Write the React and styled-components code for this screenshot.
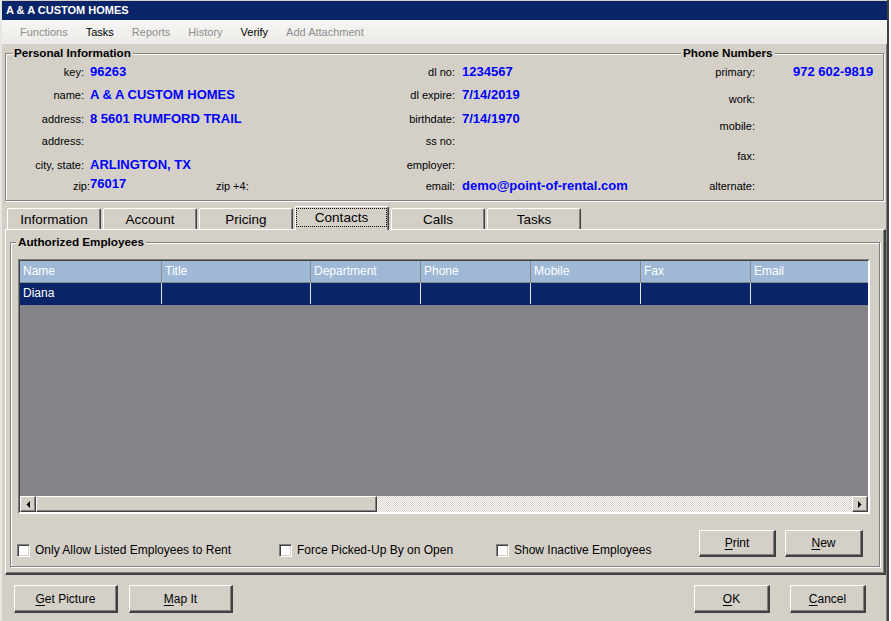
import React from "react";
import styled, { createGlobalStyle, css } from "styled-components";

const Global = createGlobalStyle`
  html, body {
    margin: 0;
    padding: 0;
    background: #ffffff;
  }
  body {
    font-family: "Liberation Sans", Arial, sans-serif;
    color: #000;
  }
  *, *::before, *::after {
    box-sizing: border-box;
  }
`;

const face = "#d4d0c8";
const navy = "#0a246a";

const raised = css`
  border: 1px solid;
  border-color: #ffffff #404040 #404040 #ffffff;
  box-shadow: inset -1px -1px 0 #808080;
`;

const sunken = css`
  border: 1px solid;
  border-color: #808080 #ffffff #ffffff #808080;
  box-shadow: inset 1px 1px 0 #404040, inset -1px -1px 0 ${face};
`;

const Window = styled.div`
  width: 889px;
  height: 621px;
  display: flex;
  flex-direction: column;
  background: ${face};
  border-left: 2px solid #e8e6e2;
  border-right: 2px solid #404040;
  box-shadow: inset -1px 0 0 #808080;
  overflow: hidden;
  & > * {
    flex-shrink: 0;
  }
`;

const TitleBar = styled.div`
  height: 20px;
  border-top: 1px solid ${face};
  background: ${navy};
  color: #fff;
  font-weight: bold;
  font-size: 11px;
  line-height: 19px;
  padding-left: 4px;
`;

const MenuBar = styled.div`
  height: 24px;
  display: flex;
  align-items: center;
  gap: 18px;
  padding-left: 18px;
  background: linear-gradient(#f7f6f4, #ecebe8);
  font-size: 11px;
`;

const MenuItem = styled.span`
  color: ${(p) => (p.$disabled ? "#8d8d8d" : "#000")};
`;

const Content = styled.div`
  display: flex;
  flex-direction: column;
  padding: 9px 1px 0 3px;
  & > * {
    flex-shrink: 0;
  }
`;

const GroupBox = styled.div`
  position: relative;
  border: 1px solid #808080;
  box-shadow: 1px 1px 0 #ffffff, inset 1px 1px 0 #ffffff;
`;

const Legend = styled.span`
  position: absolute;
  top: -8px;
  left: ${(p) => p.$left}px;
  padding: 0 2px;
  background: ${face};
  font-weight: bold;
  font-size: 11.7px;
  line-height: 14px;
`;

const InfoBox = styled(GroupBox)`
  height: 148px;
  margin-right: 2px;
  display: flex;
  padding-top: 9px;
`;

const FieldColumn = styled.div`
  width: ${(p) => p.$width}px;
  display: grid;
  grid-template-columns: ${(p) => p.$labelWidth}px auto;
  grid-template-rows: ${(p) => p.$rows};
  column-gap: ${(p) => p.$gap}px;
  align-content: start;
`;

const Label = styled.span`
  font-size: 11px;
  line-height: 18px;
  text-align: right;
  white-space: nowrap;
  ${(p) => p.$nudge && `margin-right: -${p.$nudge}px;`}
`;

const Value = styled.span`
  font-size: 13px;
  font-weight: bold;
  line-height: 18px;
  color: #0000ff;
  white-space: nowrap;
`;

const ZipCell = styled.div`
  display: flex;
  align-items: flex-start;
`;

const ZipValue = styled(Value)`
  width: 126px;
  margin-top: -2px;
`;

const TabStrip = styled.div`
  display: flex;
  gap: 2px;
  padding-left: 2px;
  margin-top: 5px;
  height: 23px;
  align-items: flex-end;
  position: relative;
  z-index: 1;
`;

const Tab = styled.div`
  width: 94px;
  height: 21px;
  border: 1px solid;
  border-bottom: none;
  border-color: #ffffff #404040 transparent #ffffff;
  box-shadow: inset -1px 0 0 #808080;
  border-radius: 2px 2px 0 0;
  background: ${face};
  display: flex;
  align-items: center;
  justify-content: center;
  font-size: 13.5px;
  ${(p) =>
    p.$active &&
    css`
      height: 24px;
      margin-bottom: -1px;
      padding: 1px 1px 3px 0;
    `}
`;

const FocusRect = styled.div`
  flex: 1;
  align-self: stretch;
  display: flex;
  align-items: center;
  justify-content: center;
  border: 1px dotted #000;
`;

const TabPanel = styled.div`
  ${raised};
  border-right-width: 2px;
  border-bottom-width: 2px;
  height: 346px;
  padding: 12px 4px 6px 4px;
  display: flex;
  flex-direction: column;
`;

const EmployeesBox = styled(GroupBox)`
  flex: 1;
  display: flex;
  flex-direction: column;
  padding: 16px 9px 8px 6px;
`;

const GridFrame = styled.div`
  border: 2px solid;
  border-color: #808080 #ffffff #ffffff #808080;
  margin-left: 1px;
  height: 255px;
  flex-shrink: 0;
  display: flex;
  flex-direction: column;
  background: #858387;
  position: relative;
  &::after {
    content: "";
    position: absolute;
    inset: -1px 0 0 -1px;
    border-top: 1px solid #404040;
    border-left: 1px solid #404040;
    pointer-events: none;
  }
`;

const GridRow = styled.div`
  display: grid;
  grid-template-columns: 142px 149px 110px 110px 110px 110px 1fr;
  height: 22px;
  background: ${(p) => (p.$header ? "#9eb8d6" : navy)};
  border-bottom: 1px solid ${(p) => (p.$header ? "#8a8a8a" : navy)};
`;

const Cell = styled.div`
  color: #fff;
  font-size: 12px;
  line-height: 21px;
  padding-left: 3px;
  border-right: 1px solid ${(p) => (p.$header ? "#8a8a8a" : "#e4e4e4")};
  &:last-child {
    border-right: none;
  }
`;

const GridEmpty = styled.div`
  flex: 1;
`;

const ScrollBar = styled.div`
  height: 16px;
  display: flex;
  background: repeating-conic-gradient(#ffffff 0 25%, ${face} 0 50%) 0 0 / 2px 2px;
`;

const ScrollButton = styled.div`
  ${raised};
  width: 16px;
  height: 16px;
  background: ${face};
  display: flex;
  align-items: center;
  justify-content: center;
`;

const ScrollThumb = styled.div`
  ${raised};
  width: ${(p) => p.$width}px;
  height: 16px;
  background: ${face};
`;

const ScrollTrack = styled.div`
  flex: 1;
`;

const Footer = styled.div`
  flex: 1;
  display: flex;
  align-items: flex-end;
`;

const CheckItem = styled.label`
  width: ${(p) => p.$width}px;
  display: flex;
  align-items: center;
  gap: 5px;
  font-size: 12px;
  height: 14px;
  margin-bottom: 1px;
`;

const CheckBox = styled.span`
  ${sunken};
  width: 13px;
  height: 13px;
  background: #fff;
`;

const Spacer = styled.div`
  flex: 1;
`;

const ButtonGroup = styled.div`
  display: flex;
  gap: ${(p) => p.$gap}px;
  align-self: ${(p) => (p.$top ? "flex-start" : "auto")};
  margin-top: ${(p) => p.$top || 0}px;
  margin-right: ${(p) => p.$right || 0}px;
`;

const Button = styled.button`
  ${raised};
  border-right-width: 2px;
  border-bottom-width: 2px;
  width: ${(p) => p.$width}px;
  height: ${(p) => p.$height}px;
  background: ${face};
  font-family: "Liberation Sans", Arial, sans-serif;
  font-size: 12px;
  color: #000;
  padding: 0;
  u {
    text-decoration-thickness: 1px;
    text-underline-offset: 2px;
  }
`;

const BottomBar = styled.div`
  display: flex;
  padding: 10px 21px 0 12px;
`;

const Arrow = ({ dir }) => (
  <svg width="4" height="7" viewBox="0 0 4 7">
    {dir === "left" ? (
      <polygon points="4,0 4,7 0.5,3.5" fill="#000" />
    ) : (
      <polygon points="0,0 0,7 3.5,3.5" fill="#000" />
    )}
  </svg>
);

const tabs = ["Information", "Account", "Pricing", "Contacts", "Calls", "Tasks"];
const columns = ["Name", "Title", "Department", "Phone", "Mobile", "Fax", "Email"];

const leftRows = "23px 24px 22px 24px 21px 18px";
const rightRows = "27px 27px 30px 30px 18px";

export default function App() {
  return (
    <>
      <Global />
      <Window>
        <TitleBar>A &amp; A CUSTOM HOMES</TitleBar>
        <MenuBar>
          <MenuItem $disabled>Functions</MenuItem>
          <MenuItem>Tasks</MenuItem>
          <MenuItem $disabled>Reports</MenuItem>
          <MenuItem $disabled>History</MenuItem>
          <MenuItem>Verify</MenuItem>
          <MenuItem $disabled>Add Attachment</MenuItem>
        </MenuBar>
        <Content>
          <InfoBox>
            <Legend $left={6}>Personal Information</Legend>
            <Legend $left={675}>Phone Numbers</Legend>
            <FieldColumn $width={334} $labelWidth={78} $gap={6} $rows={leftRows}>
              <Label>key:</Label>
              <Value>96263</Value>
              <Label>name:</Label>
              <Value>A &amp; A CUSTOM HOMES</Value>
              <Label>address:</Label>
              <Value>8 5601 RUMFORD TRAIL</Value>
              <Label>address:</Label>
              <Value />
              <Label>city, state:</Label>
              <Value>ARLINGTON, TX</Value>
              <Label $nudge={6}>zip:</Label>
              <ZipCell>
                <ZipValue>76017</ZipValue>
                <Label>zip +4:</Label>
              </ZipCell>
            </FieldColumn>
            <FieldColumn $width={300} $labelWidth={115} $gap={7} $rows={leftRows}>
              <Label>dl no:</Label>
              <Value>1234567</Value>
              <Label>dl expire:</Label>
              <Value>7/14/2019</Value>
              <Label>birthdate:</Label>
              <Value>7/14/1970</Value>
              <Label>ss no:</Label>
              <Value />
              <Label>employer:</Label>
              <Value />
              <Label>email:</Label>
              <Value>demo@point-of-rental.com</Value>
            </FieldColumn>
            <FieldColumn $width={240} $labelWidth={115} $gap={38} $rows={rightRows}>
              <Label>primary:</Label>
              <Value>972 602-9819</Value>
              <Label>work:</Label>
              <Value />
              <Label>mobile:</Label>
              <Value />
              <Label>fax:</Label>
              <Value />
              <Label>alternate:</Label>
              <Value />
            </FieldColumn>
          </InfoBox>

          <TabStrip>
            {tabs.map((t) =>
              t === "Contacts" ? (
                <Tab key={t} $active>
                  <FocusRect>{t}</FocusRect>
                </Tab>
              ) : (
                <Tab key={t}>{t}</Tab>
              )
            )}
          </TabStrip>
          <TabPanel>
            <EmployeesBox>
              <Legend $left={5}>Authorized Employees</Legend>
              <GridFrame>
                <GridRow $header>
                  {columns.map((c) => (
                    <Cell key={c} $header>
                      {c}
                    </Cell>
                  ))}
                </GridRow>
                <GridRow>
                  {columns.map((c, i) => (
                    <Cell key={c}>{i === 0 ? "Diana" : ""}</Cell>
                  ))}
                </GridRow>
                <GridEmpty />
                <ScrollBar>
                  <ScrollButton>
                    <Arrow dir="left" />
                  </ScrollButton>
                  <ScrollThumb $width={341} />
                  <ScrollTrack />
                  <ScrollButton>
                    <Arrow dir="right" />
                  </ScrollButton>
                </ScrollBar>
              </GridFrame>
              <Footer>
                <CheckItem $width={262}>
                  <CheckBox />
                  Only Allow Listed Employees to Rent
                </CheckItem>
                <CheckItem $width={217}>
                  <CheckBox />
                  Force Picked-Up By on Open
                </CheckItem>
                <CheckItem $width={180}>
                  <CheckBox />
                  Show Inactive Employees
                </CheckItem>
                <Spacer />
                <ButtonGroup $gap={9} $top={16} $right={7}>
                  <Button $width={77} $height={27}>
                    <u>P</u>rint
                  </Button>
                  <Button $width={78} $height={27}>
                    <u>N</u>ew
                  </Button>
                </ButtonGroup>
              </Footer>
            </EmployeesBox>
          </TabPanel>
        </Content>
        <BottomBar>
          <ButtonGroup $gap={11}>
            <Button $width={104} $height={28}>
              <u>G</u>et Picture
            </Button>
            <Button $width={104} $height={28}>
              <u>M</u>ap It
            </Button>
          </ButtonGroup>
          <Spacer />
          <ButtonGroup $gap={20}>
            <Button $width={76} $height={28}>
              <u>O</u>K
            </Button>
            <Button $width={76} $height={28}>
              <u>C</u>ancel
            </Button>
          </ButtonGroup>
        </BottomBar>
      </Window>
    </>
  );
}
